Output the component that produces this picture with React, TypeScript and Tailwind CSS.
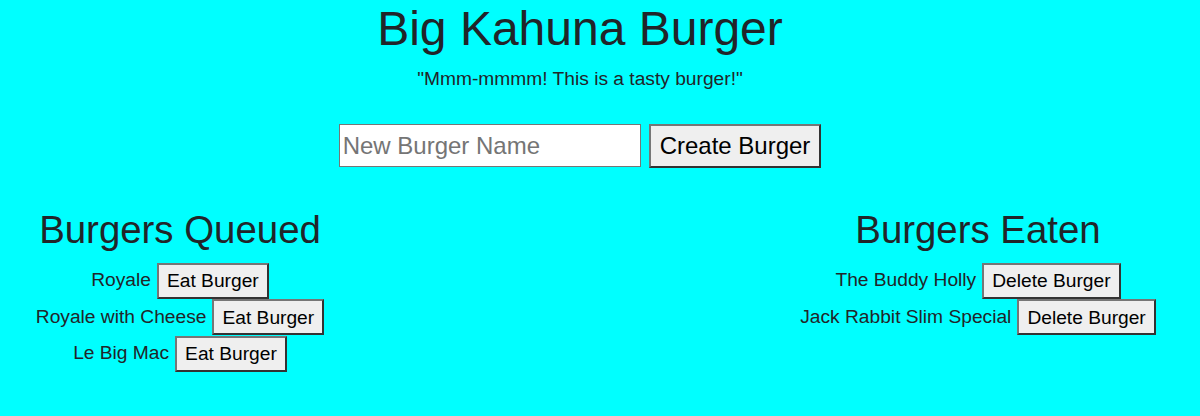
const queued = ["Royale", "Royale with Cheese", "Le Big Mac"];
const eaten = ["The Buddy Holly", "Jack Rabbit Slim Special"];

const btn =
  "bg-[#efefef] border-2 border-t-[#767676] border-l-[#767676] border-r-[#333] border-b-[#333] text-black leading-none";

function BurgerRow({ name, action }: { name: string; action: string }) {
  return (
    <div className="flex h-[36px] items-center justify-center gap-[6px]">
      <span className="text-[19.2px]">{name}</span>
      <button className={`${btn} h-[36px] px-[8px] text-[19.2px]`}>{action}</button>
    </div>
  );
}

function Column({
  title,
  items,
  action,
  className,
}: {
  title: string;
  items: string[];
  action: string;
  className: string;
}) {
  return (
    <div className={`flex flex-col items-center ${className}`}>
      <h2 className="mb-[10px] text-[38.4px] leading-[1.2]">{title}</h2>
      <div className="flex flex-col gap-[0.5px]">
        {items.map((b) => (
          <BurgerRow key={b} name={b} action={action} />
        ))}
      </div>
    </div>
  );
}

export default function App() {
  return (
    <div className="min-h-[416px] w-[1200px] bg-[#00ffff] font-['Liberation_Sans',Arial,sans-serif] text-[#212529]">
      {/* header + create form */}
      <div className="flex w-[1160px] flex-col items-center">
        <h1 className="mb-[9px] text-[48px] leading-[1.2]">Big Kahuna Burger</h1>
        <p className="text-[19.2px] leading-[24px]">"Mmm-mmmm! This is a tasty burger!"</p>
        <form className="mt-[33px] flex items-center gap-2">
          <input
            type="text"
            placeholder="New Burger Name"
            className="h-[43px] w-[302px] border border-[#767676] bg-white px-[3px] text-[24px] placeholder:text-[#757575]"
          />
          <button type="button" className={`${btn} h-[44px] px-[9px] text-[24px]`}>
            Create Burger
          </button>
        </form>
      </div>

      {/* lists */}
      <div className="mt-[39px] flex justify-between">
        <Column title="Burgers Queued" items={queued} action="Eat Burger" className="w-[360px]" />
        <Column title="Burgers Eaten" items={eaten} action="Delete Burger" className="w-[444px]" />
      </div>
    </div>
  );
}
